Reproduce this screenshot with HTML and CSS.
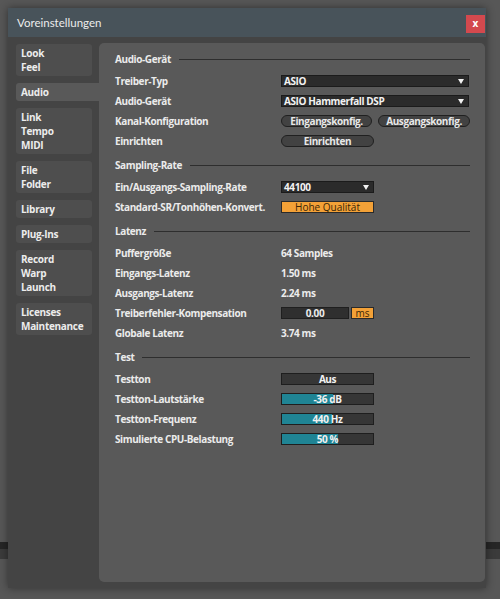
FILE: index.html
```html
<!DOCTYPE html>
<html lang="de">
<head>
    <meta charset="UTF-8">
    <title>Voreinstellungen</title>
    <link rel="stylesheet" href="styles.css">
</head>
<body>
    <div class="window">
        <div class="titlebar">
            <span class="title">Voreinstellungen</span>
            <span class="close">x</span>
        </div>
        <div class="body">
            <ul class="tabs">
                <li class="tab">Look<br>Feel</li>
                <li class="tab active">Audio</li>
                <li class="tab">Link<br>Tempo<br>MIDI</li>
                <li class="tab">File<br>Folder</li>
                <li class="tab">Library</li>
                <li class="tab">Plug-Ins</li>
                <li class="tab">Record<br>Warp<br>Launch</li>
                <li class="tab">Licenses<br>Maintenance</li>
            </ul>
            <div class="panel">
                <div class="head"><span>Audio-Gerät</span></div>
                <div class="row">
                    <span class="label">Treiber-Typ</span>
                    <div class="select full">ASIO</div>
                </div>
                <div class="row">
                    <span class="label">Audio-Gerät</span>
                    <div class="select full">ASIO Hammerfall DSP</div>
                </div>
                <div class="row">
                    <span class="label">Kanal-Konfiguration</span>
                    <div class="btn">Eingangskonfig.</div>
                    <div class="btn btn-2">Ausgangskonfig.</div>
                </div>
                <div class="row">
                    <span class="label">Einrichten</span>
                    <div class="btn btn-wide">Einrichten</div>
                </div>

                <div class="head"><span>Sampling-Rate</span></div>
                <div class="row">
                    <span class="label">Ein/Ausgangs-Sampling-Rate</span>
                    <div class="select">44100</div>
                </div>
                <div class="row">
                    <span class="label">Standard-SR/Tonhöhen-Konvert.</span>
                    <div class="toggle">Hohe Qualität</div>
                </div>

                <div class="head"><span>Latenz</span></div>
                <div class="row">
                    <span class="label">Puffergröße</span>
                    <span class="value">64 Samples</span>
                </div>
                <div class="row">
                    <span class="label">Eingangs-Latenz</span>
                    <span class="value">1.50 ms</span>
                </div>
                <div class="row">
                    <span class="label">Ausgangs-Latenz</span>
                    <span class="value">2.24 ms</span>
                </div>
                <div class="row">
                    <span class="label">Treiberfehler-Kompensation</span>
                    <div class="numbox">0.00</div>
                    <div class="unit">ms</div>
                </div>
                <div class="row">
                    <span class="label">Globale Latenz</span>
                    <span class="value">3.74 ms</span>
                </div>

                <div class="head"><span>Test</span></div>
                <div class="row">
                    <span class="label">Testton</span>
                    <div class="bar"><span class="bar-text">Aus</span></div>
                </div>
                <div class="row">
                    <span class="label">Testton-Lautstärke</span>
                    <div class="bar"><div class="fill" style="width: 56%"></div><span class="bar-text">-36 dB</span></div>
                </div>
                <div class="row">
                    <span class="label">Testton-Frequenz</span>
                    <div class="bar"><div class="fill" style="width: 55%"></div><span class="bar-text">440 Hz</span></div>
                </div>
                <div class="row">
                    <span class="label">Simulierte CPU-Belastung</span>
                    <div class="bar"><div class="fill" style="width: 61%"></div><span class="bar-text">50 %</span></div>
                </div>
            </div>
        </div>
    </div>
</body>
</html>
```

FILE: styles.css
```css
*{
    margin: 0;
    padding: 0;
    box-sizing: border-box;
}
ul{
    list-style: none;
}
body{
    width: 500px;
    height: 599px;
    overflow: hidden;
    padding: 8px 0 0 8px;
    font-family: "Open Sans", "Noto Sans", sans-serif;
    background: linear-gradient(to bottom, #575757 0, #575757 542px, #262626 542px, #262626 549px, #3b3b3b 549px, #3b3b3b 559px, #575757 559px);
}
.window{
    width: 478px;
    height: 580px;
    display: flex;
    flex-direction: column;
    background-color: #444;
    box-shadow: 0 0 8px rgba(0, 0, 0, 0.45);
}
.titlebar{
    height: 29px;
    display: flex;
    justify-content: space-between;
    align-items: flex-start;
    background-color: #48535a;
    padding: 0 1px 0 9px;
}
.titlebar .title{
    line-height: 29px;
    font-family: Lato, "Open Sans", sans-serif;
    font-size: 11.5px;
    color: #ececec;
}
.titlebar .close{
    margin-top: 7px;
    width: 19px;
    height: 18px;
    background-color: #d3494e;
    color: #fff;
    font-size: 10px;
    font-weight: 700;
    line-height: 17px;
    text-align: center;
}
.body{
    flex: 1;
    display: flex;
    padding: 6px 7px 6px 8px;
}
.tabs{
    width: 76px;
    flex-shrink: 0;
    margin-right: 7px;
    padding-top: 1px;
}
.tab{
    background-color: #4e4e4e;
    border-radius: 3px;
    padding: 2px 5px;
    margin-bottom: 7px;
    font-size: 10px;
    font-weight: 700;
    line-height: 14px;
    color: #ececec;
    letter-spacing: -0.3px;
}
.tab.active{
    background-color: #595959;
    margin-right: -7px;
    border-radius: 3px 0 0 3px;
}
.panel{
    flex: 1;
    background-color: #595959;
    border-radius: 5px;
    padding: 6px 15px 0 16px;
    color: #ebebeb;
    font-size: 10px;
    font-weight: 700;
    letter-spacing: -0.4px;
}
.head{
    height: 20px;
    margin-top: 4px;
    display: flex;
    align-items: center;
}
.head:first-child{
    margin-top: 0;
}
.head::after{
    content: "";
    flex: 1;
    height: 1px;
    margin-left: 8px;
    background-color: #2e2e2e;
}
.head + .row{
    margin-top: 2px;
}
.row{
    height: 20px;
    display: flex;
    align-items: center;
}
.row .label{
    width: 166px;
    flex-shrink: 0;
}
.select{
    position: relative;
    width: 93px;
    height: 12px;
    background-color: #2b2b2b;
    border: 1px solid #1b1b1b;
    padding-left: 2px;
    line-height: 10px;
    color: #f2f2f2;
}
.select.full{
    width: 188px;
}
.select::after{
    content: "";
    position: absolute;
    right: 4px;
    top: 3px;
    border-left: 3px solid transparent;
    border-right: 3px solid transparent;
    border-top: 5px solid #f2f2f2;
}
.btn{
    width: 91px;
    height: 12px;
    border: 1px solid #202020;
    border-radius: 6px;
    background-color: #424242;
    text-align: center;
    line-height: 10px;
    color: #e8e8e8;
}
.btn-2{
    width: 92px;
    margin-left: 6px;
}
.btn-wide{
    width: 93px;
}
.toggle{
    width: 93px;
    height: 12px;
    border: 1px solid #2a2a2a;
    background-color: #f3a137;
    color: #3a2608;
    font-weight: 400;
    letter-spacing: 0;
    text-align: center;
    line-height: 10px;
}
.value{
    color: #ececec;
}
.numbox{
    width: 68px;
    height: 12px;
    border: 1px solid #1f1f1f;
    background-color: #2f2f2f;
    text-align: center;
    line-height: 10px;
}
.unit{
    width: 23px;
    height: 12px;
    margin-left: 2px;
    border: 1px solid #2a2a2a;
    background-color: #f3a137;
    color: #3a2608;
    font-weight: 400;
    letter-spacing: 0;
    text-align: center;
    line-height: 10px;
}
.bar{
    position: relative;
    width: 93px;
    height: 12px;
    border: 1px solid #1e1e1e;
    background-color: #363636;
}
.bar .fill{
    height: 100%;
    background-color: #1f8494;
}
.bar .bar-text{
    position: absolute;
    left: 0;
    right: 0;
    top: 0;
    text-align: center;
    line-height: 10px;
    color: #f2f2f2;
}
```
